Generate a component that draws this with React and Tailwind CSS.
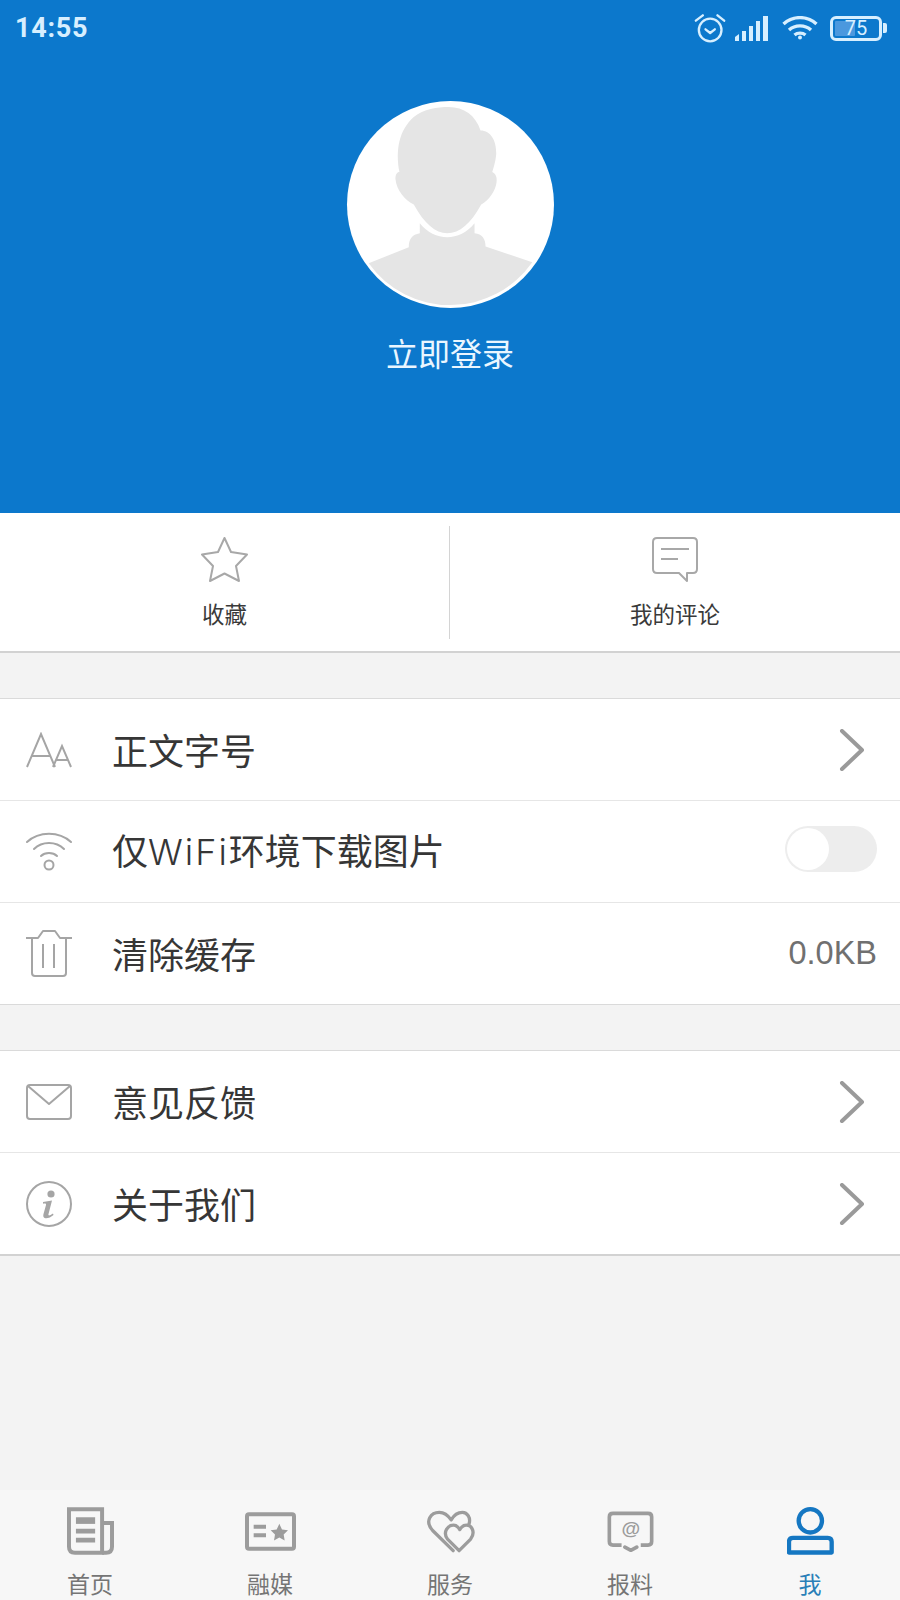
import React from 'react';

const FONT = { fontFamily: '"Noto Sans CJK SC", "Noto Sans", sans-serif' };

const Chevron = () => (
  <div className="flex w-[38px]">
    <svg width="26" height="42" viewBox="0 0 26 42" fill="none" stroke="#9a9a9a" strokeWidth="4" strokeLinecap="round" strokeLinejoin="round">
      <path d="M3 2 L23 21 L3 40" />
    </svg>
  </div>
);

const FontIcon = () => (
  <svg width="46" height="36" viewBox="0 0 46 36" fill="none" stroke="#a5a5a5" strokeWidth="2">
    <path d="M1 35 L15 2 L29 35 M6 24 H24" />
    <path d="M27 35 L36 14 L45 35 M30 28 H42" />
  </svg>
);

const WifiIcon = () => (
  <svg width="46" height="40" viewBox="0 0 46 40" fill="none" stroke="#a5a5a5" strokeWidth="2" strokeLinecap="round">
    <path d="M1 10 C13 -1 33 -1 45 10" />
    <path d="M8 17 C16 9 30 9 38 17" />
    <path d="M15 24 C19 20 27 20 31 24" />
    <circle cx="23" cy="33" r="4.5" />
  </svg>
);

const TrashIcon = () => (
  <svg width="46" height="48" viewBox="0 0 46 48" fill="none" stroke="#a5a5a5" strokeWidth="2" strokeLinejoin="round">
    <path d="M0 8 H12 L17 1 H29 L34 8 H46" />
    <path d="M6 8 V43 Q6 46 9 46 H37 Q40 46 40 43 V8" />
    <path d="M17 14 V38 M28 14 V38" />
  </svg>
);

const MailIcon = () => (
  <svg width="46" height="36" viewBox="0 0 46 36" fill="none" stroke="#a5a5a5" strokeWidth="2" strokeLinejoin="round">
    <rect x="1" y="1" width="44" height="34" rx="3" />
    <path d="M2 2 L23 20 L44 2" />
  </svg>
);

const InfoIcon = () => (
  <svg width="46" height="46" viewBox="0 0 46 46">
    <circle cx="23" cy="23" r="22" fill="none" stroke="#a5a5a5" strokeWidth="2" />
    <circle cx="25" cy="13" r="3.6" fill="#a5a5a5" />
    <path d="M17 21 L26 19.5 L22.5 33 C22 35 23.5 35 27 32.5 L27.5 34 C23 38 16 39 17.5 33 L20 24 C20.3 22.5 19 22.4 17 22.8 Z" fill="#a5a5a5" />
  </svg>
);

const Row = ({ icon, label, right, last }) => (
  <div className={`flex items-center pl-[26px] pr-[23px] ${last ? 'h-[101px]' : 'h-[102px] border-b border-[#e6e6e6]'}`}>
    <div className="flex w-[46px] justify-center">{icon}</div>
    <span className="ml-[40px] flex-1 pb-[2px] text-[36px] leading-none text-[#363636]">{label}</span>
    {right}
  </div>
);

const NavItem = ({ icon, label, active }) => (
  <div className="flex flex-1 flex-col items-center">
    <div className="flex h-[48px] items-center justify-center">{icon}</div>
    <span className={`mt-[13px] text-[23px] leading-[30px] ${active ? 'text-[#2a7fb8]' : 'text-[#757575]'}`}>{label}</span>
  </div>
);

export default function App() {
  return (
    <div className="flex h-[1600px] w-[900px] flex-col overflow-hidden bg-[#f3f3f3]" style={FONT}>
      {/* header */}
      <div className="flex h-[513px] flex-col items-center bg-[#0c78cc]">
        <div className="flex h-[56px] w-full items-center justify-between pl-[15px] pr-[13px] text-[#d7efff]">
          <span className="text-[27px] font-bold tracking-[0.7px]" style={{ fontFamily: 'Roboto, sans-serif' }}>14:55</span>
          <div className="flex items-center">
            <svg width="32" height="29" viewBox="160 38 95 87" fill="none" stroke="#d7efff" strokeWidth="7" strokeLinecap="round" strokeLinejoin="round">
              <circle cx="208" cy="86" r="34" />
              <path d="M194 84 L208 95 L222 84" />
              <path d="M165 58 L186 42 M230 42 L250 58" />
            </svg>
            <svg className="ml-[9px]" width="34" height="25" viewBox="0 0 34 25" fill="#d7efff">
              <path d="M0 25 V21 L4 18 V25 Z" />
              <rect x="7" y="15" width="4" height="10" />
              <rect x="14" y="10" width="4" height="15" />
              <rect x="21" y="5" width="4" height="20" />
              <rect x="28" y="0" width="5" height="25" />
            </svg>
            <svg className="ml-[13px]" width="36" height="24" viewBox="0 0 36 24" fill="none" stroke="#d7efff" strokeWidth="3.4">
              <path d="M1.5 8 C11 -0.5 25 -0.5 34.5 8" />
              <path d="M7 14 C13 8.5 23 8.5 29 14" />
              <path d="M12.5 19 C15.5 16.5 20.5 16.5 23.5 19" />
              <circle cx="18" cy="21.5" r="2" fill="#d7efff" stroke="none" />
            </svg>
            <div className="relative ml-[12px] h-[25px] w-[52px] rounded-[6px] border-[3px] border-[#d7efff] p-[2px]">
              <div className="h-full w-[20px] rounded-[1px] bg-[#4b98de]" />
              <span className="absolute inset-0 flex items-center justify-center text-[20px] leading-none" style={{ fontFamily: 'Roboto, sans-serif' }}>75</span>
            </div>
            <div className="ml-[1px] h-[10px] w-[4px] rounded-r-[2px] bg-[#d7efff]" />
          </div>
        </div>

        <div className="mt-[45px] h-[207px] w-[207px] overflow-hidden rounded-full bg-white">
          <svg width="207" height="207" viewBox="80 32 620 620" fill="#e5e5e5">
            <path d="M380 428 C345 428 312 400 280 342 C255 330 228 300 225 265 C225 250 232 245 237 245 C225 180 235 120 280 80 C310 55 350 50 385 50 C430 50 465 75 480 120 C510 120 528 150 527 190 C525 215 518 235 515 245 C525 250 530 260 528 275 C525 300 505 330 482 342 C450 400 418 428 380 428 Z" />
            <path d="M298 398 C320 425 350 440 380 440 C410 440 440 425 462 398 L462 428 C485 430 495 445 495 468 L635 515 A300 300 0 0 1 145 518 L265 470 C265 445 275 432 298 428 Z" />
          </svg>
        </div>
        <span className="mt-[21px] text-[32px] leading-[46px] text-[#eaf6ff]">立即登录</span>
      </div>

      {/* collect / comments */}
      <div className="flex h-[140px] items-center border-b-2 border-[#d2d2d2] bg-white">
        <div className="flex w-[449px] flex-col items-center pt-[3px]">
          <svg width="47" height="45" viewBox="0 0 47 45" fill="none" stroke="#a8a8a8" strokeWidth="2" strokeLinejoin="round">
            <path d="M23.5 1 L30 15 L46 17.5 L35 29 L38 44 L23.5 36.5 L9 44 L12 29 L1 17.5 L17 15 Z" />
          </svg>
          <span className="mt-[14px] text-[22.5px] leading-[34px] text-[#3a3a3a]">收藏</span>
        </div>
        <div className="h-[113px] w-px bg-[#d4d4d4]" />
        <div className="flex flex-1 flex-col items-center pt-[3px]">
          <svg width="46" height="45" viewBox="0 0 46 45" fill="none" stroke="#a8a8a8" strokeWidth="2" strokeLinejoin="round">
            <path d="M5 1 H41 Q45 1 45 5 V32 Q45 36 41 36 H35 V44 L27 36 H5 Q1 36 1 32 V5 Q1 1 5 1 Z" />
            <path d="M9 12 H37 M9 22 H26" />
          </svg>
          <span className="mt-[14px] text-[22.5px] leading-[34px] text-[#3a3a3a]">我的评论</span>
        </div>
      </div>

      {/* settings */}
      <div className="mt-[45px] border-y border-[#dadada] bg-white">
        <Row icon={<FontIcon />} label="正文字号" right={<Chevron />} />
        <Row
          icon={<WifiIcon />}
          label={<>仅<span style={{ fontFamily: 'Inter, sans-serif' }} className="font-light tracking-[2px]">WiFi</span>环境下载图片</>}
          right={
            <div className="mb-[6px] h-[46px] w-[92px] rounded-full bg-[#ededed] p-[2px]">
              <div className="h-[42px] w-[42px] rounded-full bg-white" />
            </div>
          }
        />
        <Row
          icon={<TrashIcon />}
          label="清除缓存"
          last
          right={<span className="text-[32.5px] leading-none text-[#707070]" style={{ fontFamily: '"Liberation Sans", sans-serif' }}>0.0KB</span>}
        />
      </div>

      <div className="mt-[45px] border-t border-[#dadada] border-b-2 border-b-[#d2d2d2] bg-white">
        <Row icon={<MailIcon />} label="意见反馈" right={<Chevron />} />
        <Row icon={<InfoIcon />} label="关于我们" last right={<Chevron />} />
      </div>

      <div className="flex-1" />

      {/* bottom nav */}
      <div className="flex h-[110px] bg-[#f7f7f7] pt-[17px]">
        <NavItem
          label="首页"
          icon={
            <svg width="47" height="48" viewBox="198 85 142 143" fill="none" stroke="#9c9c9c" strokeWidth="12">
              <path d="M204 91 H304 V222 H222 Q204 222 204 204 Z" />
              <path d="M304 132 H334 V204 Q334 222 316 222 H304" />
              <path d="M225 125 H283" strokeWidth="20" />
              <path d="M225 157 H283 M225 184 H283" strokeWidth="14" />
            </svg>
          }
        />
        <NavItem
          label="融媒"
          icon={
            <svg width="51" height="39" viewBox="732 97 153 116" fill="none" stroke="#9c9c9c" strokeWidth="12">
              <rect x="738" y="103" width="141" height="104" rx="6" />
              <path d="M758 141 H795 M758 166 H795" />
              <path d="M835 132 L843 149 L861 151 L848 164 L851 182 L835 173 L819 182 L822 164 L809 151 L827 149 Z" fill="#9c9c9c" stroke="none" />
            </svg>
          }
        />
        <NavItem
          label="服务"
          icon={
            <svg width="50" height="43" viewBox="1273 90 151 130" fill="none" stroke="#9c9c9c" strokeWidth="10" strokeLinejoin="round" strokeLinecap="round">
              <path d="M1358 213 L1296 152 C1270 122 1292 97 1316 97 C1333 97 1344 108 1352 120 C1360 106 1373 97 1386 97 C1401 97 1412 114 1406 132" />
              <path d="M1376 213 L1341 178 C1325 156 1343 136 1359 136 C1368 136 1373 141 1378 149 C1383 141 1390 136 1398 136 C1415 136 1426 158 1411 178 Z" />
            </svg>
          }
        />
        <NavItem
          label="报料"
          icon={
            <svg width="47" height="41" viewBox="318 95 142 124" fill="none" stroke="#9c9c9c" strokeWidth="11">
              <path d="M362 198 H336 Q325 198 325 187 V113 Q325 102 336 102 H442 Q453 102 453 113 V187 Q453 198 442 198 H420" />
              <path d="M372 204 L390 214 L408 204" strokeLinecap="round" />
              <text x="390" y="167" textAnchor="middle" fontSize="58" fontWeight="700" fill="#9c9c9c" stroke="none" style={{ fontFamily: '"Liberation Sans", sans-serif' }}>@</text>
            </svg>
          }
        />
        <NavItem
          label="我"
          active
          icon={
            <svg width="47" height="48" viewBox="858 86 141 143" fill="none" stroke="#1577c2" strokeWidth="13">
              <circle cx="928" cy="127" r="35" />
              <path d="M864 222 V190 Q864 178 876 178 H980 Q992 178 992 190 V222 Z" strokeLinejoin="round" />
            </svg>
          }
        />
      </div>
    </div>
  );
}
